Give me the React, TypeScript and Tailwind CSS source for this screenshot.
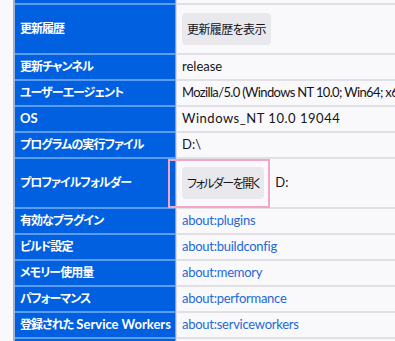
import React from "react";

function Row({
  label,
  tall,
  children,
}: {
  label: React.ReactNode;
  tall?: boolean;
  children: React.ReactNode;
}) {
  return (
    <div className="flex">
      <div
        className={`w-[160px] shrink-0 bg-[#0060df] border-b-2 border-[#5c9df4] flex items-center pl-[5px] text-white font-bold text-[12px] tracking-[-0.08em] [font-feature-settings:'palt'] font-['Lato','Noto_Sans_CJK_JP',sans-serif] ${
          tall ? "h-[50px]" : "h-[26px]"
        }`}
      >
        <span className="whitespace-pre">{label}</span>
      </div>
      <div className="w-[2px] shrink-0 flex">
        <div className="w-[1px] bg-[#6ea6f5]" />
        <div className="w-[1px] bg-[#d9dce4]" />
      </div>
      <div
        className={`flex-1 min-w-0 bg-[#f9f9fb] border-b-2 border-[#e0e0e6] flex items-center pl-[5px] text-[13px] text-[#15141a] whitespace-nowrap overflow-hidden font-['Lato','Noto_Sans_CJK_JP',sans-serif] ${
          tall ? "h-[50px]" : "h-[26px]"
        }`}
      >
        {children}
      </div>
    </div>
  );
}

function Btn({ children, tight }: { children: React.ReactNode; tight?: boolean }) {
  return (
    <div
      className={`h-[32px] px-[5px] rounded-[4px] bg-[#e9e9ed] flex items-center text-[12px] text-[#15141a] [font-feature-settings:'palt'] font-['Noto_Sans_CJK_JP',sans-serif] ${
        tight ? "tracking-[-0.13em]" : "tracking-[-0.05em]"
      }`}
    >
      {children}
    </div>
  );
}

function Link({ children }: { children: React.ReactNode }) {
  return <span className="text-[#1f68d8] tracking-[-0.02em]">{children}</span>;
}

export default function App() {
  return (
    <div className="relative w-[395px] h-[341px] overflow-hidden bg-[#f9f9fb]">
      <div className="ml-[13px] border-l-2 border-[#9fb2d6]">
        <div className="flex">
          <div className="w-[160px] h-[5px] bg-[#0060df] border-b-2 border-[#5c9df4]" />
          <div className="w-[2px] shrink-0 flex">
            <div className="w-[1px] bg-[#6ea6f5]" />
            <div className="w-[1px] bg-[#d9dce4]" />
          </div>
          <div className="flex-1 h-[5px] bg-[#f9f9fb] border-b-2 border-[#e0e0e6]" />
        </div>
        <Row label="更新履歴" tall>
          <Btn>更新履歴を表示</Btn>
        </Row>
        <Row label="更新チャンネル">release</Row>
        <Row label="ユーザーエージェント">
          <span className="tracking-[-0.05em]">
            Mozilla/5.0 (Windows NT 10.0; Win64; x64; rv:109.0) Gecko/20100101
          </span>
        </Row>
        <Row label={<span className="text-[13px] tracking-normal">OS</span>}>
          <span className="tracking-[0.04em]">Windows_NT 10.0 19044</span>
        </Row>
        <Row label="プログラムの実行ファイル">D:\</Row>
        <Row label="プロファイルフォルダー" tall>
          <Btn tight>フォルダーを開く</Btn>
          <span className="ml-[11px]">D:</span>
        </Row>
        <Row label="有効なプラグイン">
          <Link>about:plugins</Link>
        </Row>
        <Row label="ビルド設定">
          <Link>about:buildconfig</Link>
        </Row>
        <Row label="メモリー使用量">
          <Link>about:memory</Link>
        </Row>
        <Row label="パフォーマンス">
          <Link>about:performance</Link>
        </Row>
        <Row
          label={
            <>
              登録された
              <span className="text-[13px] tracking-normal"> Service Workers</span>
            </>
          }
        >
          <Link>about:serviceworkers</Link>
        </Row>
        <Row label="">{""}</Row>
      </div>
      <div className="absolute left-[168px] top-[159px] w-[102px] h-[49px] border-2 border-[#f4a6c7] pointer-events-none" />
    </div>
  );
}
